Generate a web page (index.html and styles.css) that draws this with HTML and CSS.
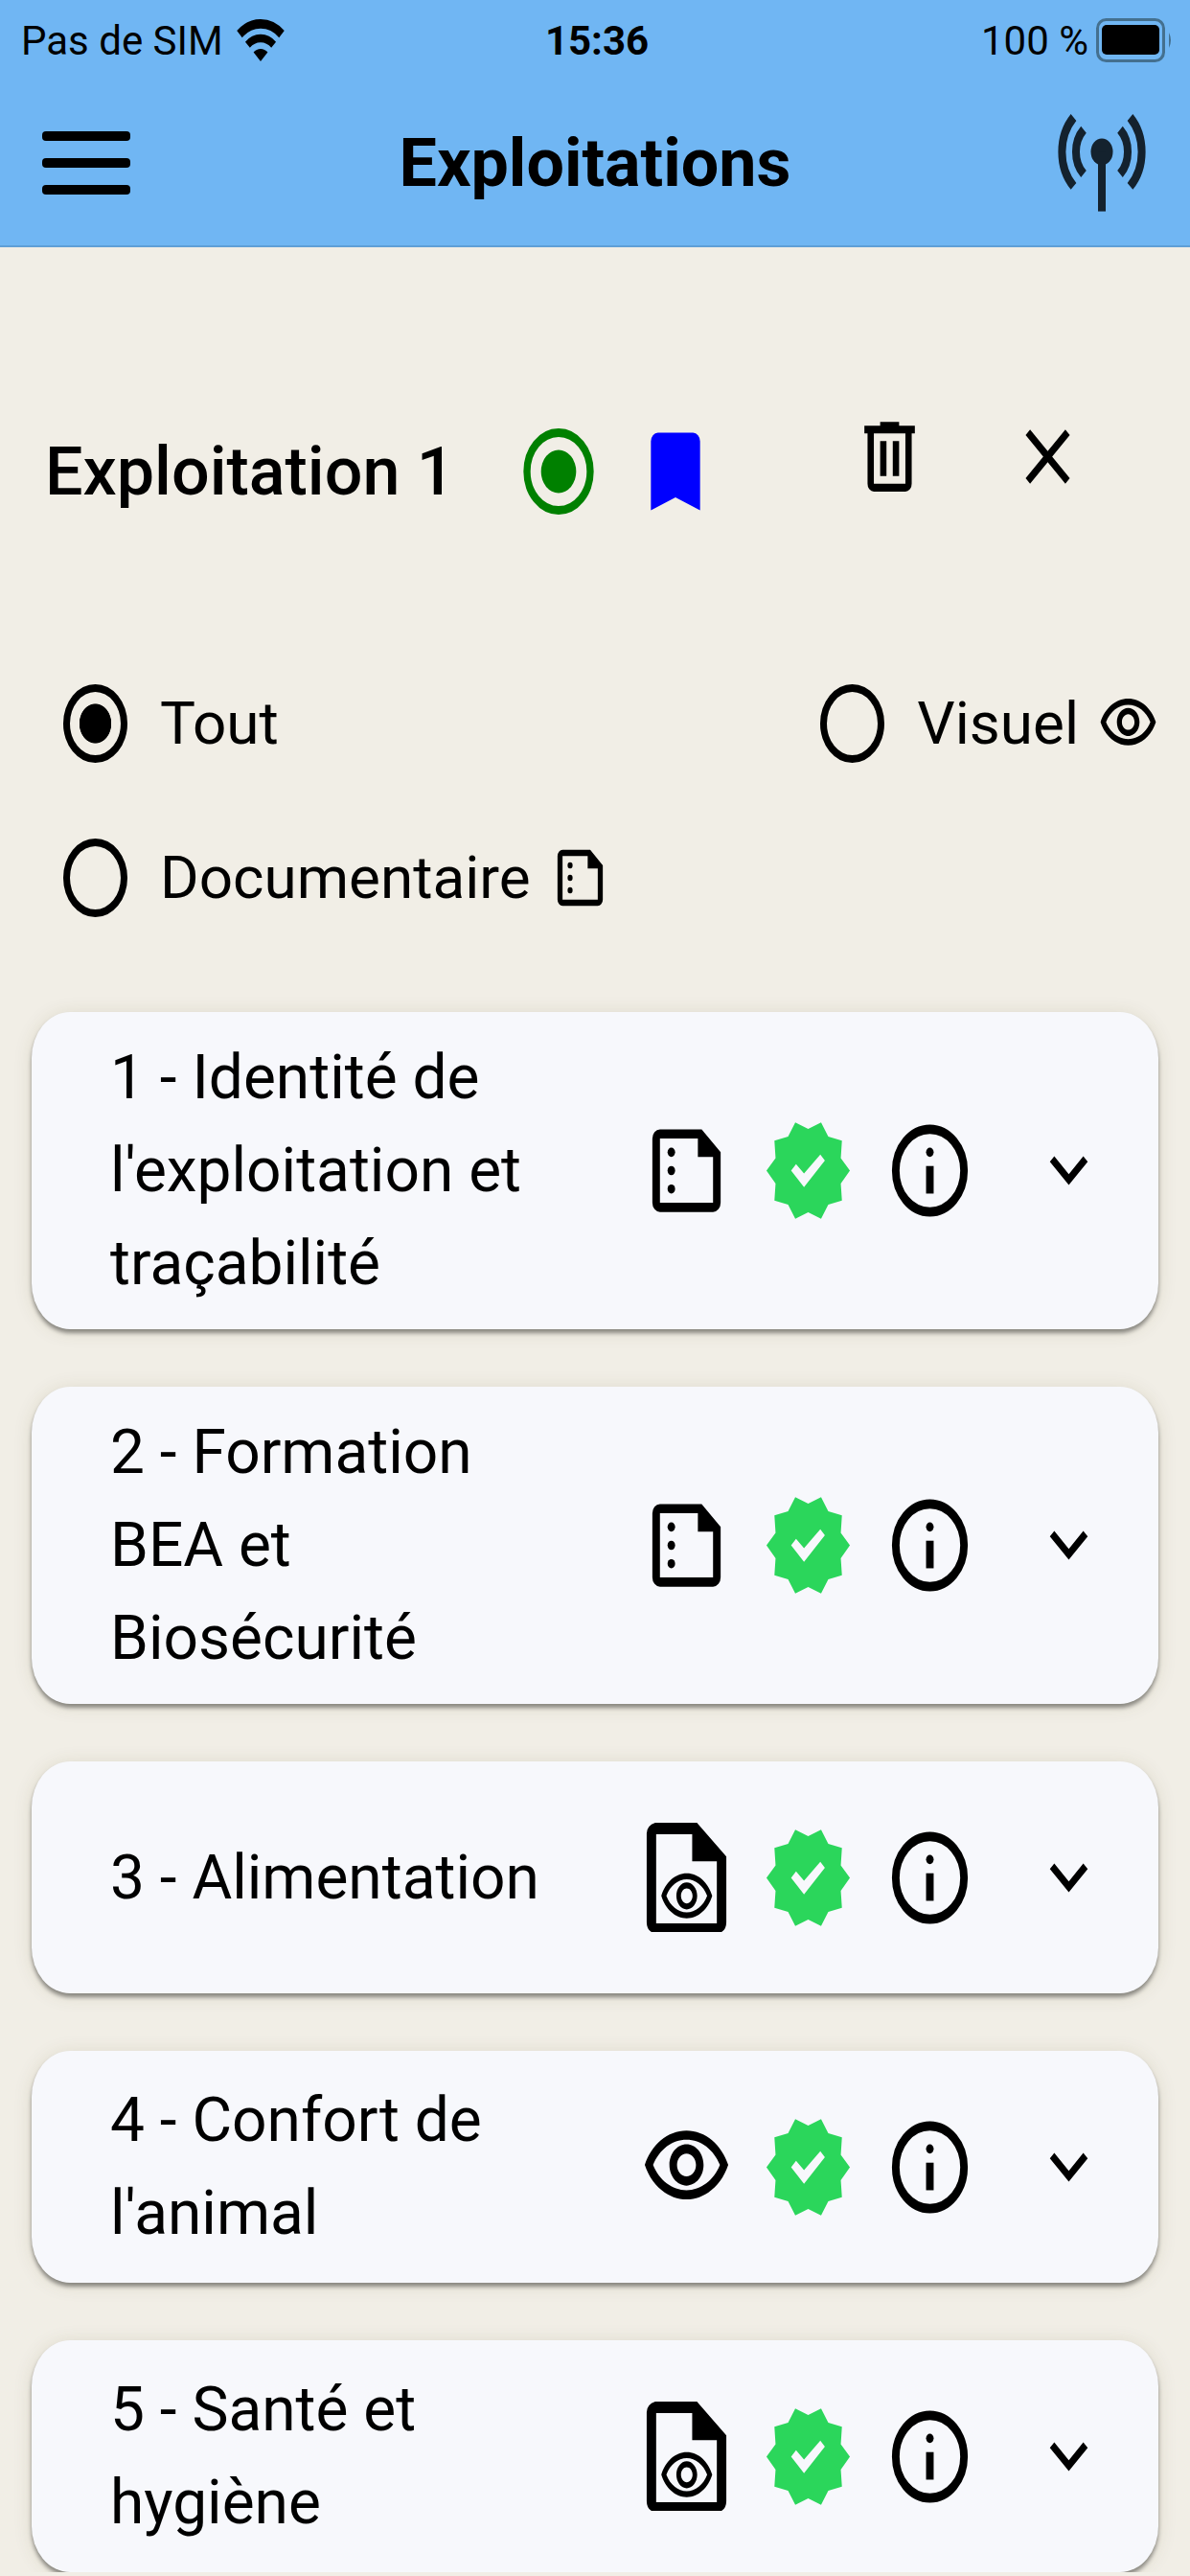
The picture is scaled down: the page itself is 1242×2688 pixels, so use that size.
FILE: index.html
```html
<!DOCTYPE html>
<html lang="fr">

<head>
    <meta charset="UTF-8" />
    <meta name="viewport" content="width=device-width, initial-scale=1.0" />
    <title>Exploitations</title>
    <link rel="stylesheet" href="styles.css">
</head>

<body>
    <!-- Icônes partagées -->
    <svg class="sprite" aria-hidden="true">
        <symbol id="icon-doc" viewBox="0 0 24 24" preserveAspectRatio="none">
            <path fill-rule="evenodd" d="M5 3h11l5 5v11a2 2 0 0 1-2 2H5a2 2 0 0 1-2-2V5a2 2 0 0 1 2-2zm0 2v14h14V9h-4V5z" />
            <circle cx="8" cy="8" r="1" />
            <circle cx="8" cy="12" r="1" />
            <circle cx="8" cy="16" r="1" />
        </symbol>
        <symbol id="icon-eye" viewBox="0 0 24 24" preserveAspectRatio="none">
            <path d="M12 6c3.79 0 7.17 2.13 8.82 5.5C19.17 14.87 15.79 17 12 17s-7.17-2.13-8.82-5.5C4.83 8.13 8.21 6 12 6m0-2C7 4 2.73 7.11 1 11.5 2.73 15.89 7 19 12 19s9.27-3.11 11-7.5C21.27 7.11 17 4 12 4zm0 5c1.38 0 2.5 1.12 2.5 2.5S13.38 14 12 14s-2.5-1.12-2.5-2.5S10.62 9 12 9m0-2c-2.48 0-4.5 2.02-4.5 4.5S9.52 16 12 16s4.5-2.02 4.5-4.5S14.48 7 12 7z" />
        </symbol>
        <symbol id="icon-doc-eye" viewBox="0 0 96 114" preserveAspectRatio="none">
            <path fill-rule="evenodd" d="M15 0h44l31 35v68q0 7-5 10H11q-5-3-5-10V11q0-8 9-11zm1 12v92h64V40H54V12z" />
            <path transform="translate(19 40) scale(2.44 3.1)" d="M12 6c3.79 0 7.17 2.13 8.82 5.5C19.17 14.87 15.79 17 12 17s-7.17-2.13-8.82-5.5C4.83 8.13 8.21 6 12 6m0-2C7 4 2.73 7.11 1 11.5 2.73 15.89 7 19 12 19s9.27-3.11 11-7.5C21.27 7.11 17 4 12 4zm0 5c1.38 0 2.5 1.12 2.5 2.5S13.38 14 12 14s-2.5-1.12-2.5-2.5S10.62 9 12 9m0-2c-2.48 0-4.5 2.02-4.5 4.5S9.52 16 12 16s4.5-2.02 4.5-4.5S14.48 7 12 7z" />
        </symbol>
        <symbol id="icon-badge" viewBox="-12 -12 24 24" preserveAspectRatio="none">
            <path fill-rule="evenodd" d="M-3.4-10.5L0-9.1 3.4-10.5 5.3-7.4 8.9-6.5 8.6-2.7 11 0 8.6 2.8 8.9 6.5 5.3 7.4 3.4 10.5 0 9.1-3.4 10.5-5.3 7.4-8.9 6.5-8.6 2.8-11 0-8.6-2.7-8.9-6.5-5.3-7.4zM-4.5 0L-1.1 3.6 4.4-2.2 3.2-3.5-1.1.6-3.2-1.4z" />
        </symbol>
        <symbol id="icon-info" viewBox="0 0 24 24" preserveAspectRatio="none">
            <circle cx="12" cy="12" r="9" fill="none" stroke="currentColor" stroke-width="2" />
            <circle cx="12" cy="8" r="1" />
            <path d="M11 11h2v6h-2z" />
        </symbol>
        <symbol id="icon-chevron" viewBox="0 0 24 24" preserveAspectRatio="none">
            <path d="M7.4 8.3L12 12.9l4.6-4.6L18 9.7l-6 6-6-6z" />
        </symbol>
        <symbol id="icon-trash" viewBox="0 0 24 24" preserveAspectRatio="none">
            <path fill-rule="evenodd" d="M9 3h6v1h5v2h-1v13a2 2 0 0 1-2 2H7a2 2 0 0 1-2-2V6H4V4h5zM7 6v13h10V6zM9 8h2v9H9zM13 8h2v9h-2z" />
        </symbol>
        <symbol id="icon-close" viewBox="0 0 24 24" preserveAspectRatio="none">
            <path d="M19 6.41L17.59 5 12 10.59 6.41 5 5 6.41 10.59 12 5 17.59 6.41 19 12 13.41 17.59 19 19 17.59 13.41 12z" />
        </symbol>
        <symbol id="icon-target" viewBox="0 0 24 24" preserveAspectRatio="none">
            <circle cx="12" cy="12" r="9" fill="none" stroke="currentColor" stroke-width="2" />
            <circle cx="12" cy="12" r="5" />
        </symbol>
        <symbol id="icon-bookmark" viewBox="0 0 24 24" preserveAspectRatio="none">
            <path d="M17 3H7a2 2 0 0 0-2 2v16l7-3 7 3V5a2 2 0 0 0-2-2z" />
        </symbol>
    </svg>

    <header class="header">
        <div class="status-bar">
            <div class="status-left">
                <span>Pas de SIM</span>
                <svg class="wifi" viewBox="-25 -36 50 36" preserveAspectRatio="none" aria-hidden="true">
                    <path d="M-22-23.2A32 32 0 0 1 22-23.2" fill="none" stroke="currentColor" stroke-width="8" />
                    <path d="M-13.6-14.1A19.6 19.6 0 0 1 13.6-14.1" fill="none" stroke="currentColor" stroke-width="7" />
                    <path d="M0 0L-7.4-7.7A10.6 10.6 0 0 1 7.4-7.7z" />
                </svg>
            </div>
            <span class="clock">15:36</span>
            <div class="status-right">
                <span>100 %</span>
                <svg class="battery" viewBox="0 0 80 46" aria-hidden="true">
                    <rect x="1.500" y="1.500" width="69" height="43" rx="9" fill="none" stroke="#44708f" stroke-width="3" />
                    <rect x="6" y="7" width="60" height="31" rx="5" />
                    <path d="M76 15q4 8 0 16z" fill="#44708f" />
                </svg>
            </div>
        </div>
        <nav class="nav-bar">
            <button class="icon-btn menu-btn" aria-label="Menu">
                <span class="bar"></span>
                <span class="bar"></span>
                <span class="bar"></span>
            </button>
            <h1 class="page-title">Exploitations</h1>
            <button class="icon-btn network-btn" aria-label="Réseau">
                <svg class="antenna" viewBox="-48 -34 96 87" preserveAspectRatio="none">
                    <circle cx="0" cy="0" r="11.500" />
                    <path d="M-4 0h8v51h-8z" />
                    <path fill="none" stroke="currentColor" stroke-width="8" d="M-29.500-29.500A42 42 0 0 0-29.500 29.500M29.500-29.500A42 42 0 0 1 29.500 29.500M-19-19A26.500 26.500 0 0 0-19 19M19-19A26.500 26.500 0 0 1 19 19" />
                </svg>
            </button>
        </nav>
    </header>

    <main class="content">
        <div class="farm-header">
            <h2 class="farm-name">Exploitation 1</h2>
            <svg class="icon-lg target"><use href="#icon-target" /></svg>
            <svg class="icon-lg bookmark"><use href="#icon-bookmark" /></svg>
            <div class="farm-actions">
                <button class="icon-btn" aria-label="Supprimer">
                    <svg class="icon-sm"><use href="#icon-trash" /></svg>
                </button>
                <button class="icon-btn" aria-label="Fermer">
                    <svg class="icon-sm"><use href="#icon-close" /></svg>
                </button>
            </div>
        </div>

        <form class="filters">
            <label class="filter" for="filter-all">
                <input type="radio" id="filter-all" name="filter" checked>
                <span>Tout</span>
            </label>
            <label class="filter" for="filter-visual">
                <input type="radio" id="filter-visual" name="filter">
                <span>Visuel</span>
                <svg class="icon-xs"><use href="#icon-eye" /></svg>
            </label>
            <label class="filter" for="filter-doc">
                <input type="radio" id="filter-doc" name="filter">
                <span>Documentaire</span>
                <svg class="icon-xs"><use href="#icon-doc" /></svg>
            </label>
        </form>

        <ul class="cards">
            <li class="card">
                <h3 class="card-title">1 - Identité de l'exploitation et traçabilité</h3>
                <div class="card-icons">
                    <svg class="icon"><use href="#icon-doc" /></svg>
                    <svg class="icon badge"><use href="#icon-badge" /></svg>
                    <button class="icon-btn" aria-label="Informations"><svg class="icon"><use href="#icon-info" /></svg></button>
                </div>
                <button class="icon-btn" aria-label="Ouvrir"><svg class="icon-sm"><use href="#icon-chevron" /></svg></button>
            </li>
            <li class="card">
                <h3 class="card-title">2 - Formation BEA et Biosécurité</h3>
                <div class="card-icons">
                    <svg class="icon"><use href="#icon-doc" /></svg>
                    <svg class="icon badge"><use href="#icon-badge" /></svg>
                    <button class="icon-btn" aria-label="Informations"><svg class="icon"><use href="#icon-info" /></svg></button>
                </div>
                <button class="icon-btn" aria-label="Ouvrir"><svg class="icon-sm"><use href="#icon-chevron" /></svg></button>
            </li>
            <li class="card">
                <h3 class="card-title">3 - Alimentation</h3>
                <div class="card-icons">
                    <svg class="icon"><use href="#icon-doc-eye" /></svg>
                    <svg class="icon badge"><use href="#icon-badge" /></svg>
                    <button class="icon-btn" aria-label="Informations"><svg class="icon"><use href="#icon-info" /></svg></button>
                </div>
                <button class="icon-btn" aria-label="Ouvrir"><svg class="icon-sm"><use href="#icon-chevron" /></svg></button>
            </li>
            <li class="card">
                <h3 class="card-title">4 - Confort de l'animal</h3>
                <div class="card-icons">
                    <svg class="icon"><use href="#icon-eye" /></svg>
                    <svg class="icon badge"><use href="#icon-badge" /></svg>
                    <button class="icon-btn" aria-label="Informations"><svg class="icon"><use href="#icon-info" /></svg></button>
                </div>
                <button class="icon-btn" aria-label="Ouvrir"><svg class="icon-sm"><use href="#icon-chevron" /></svg></button>
            </li>
            <li class="card">
                <h3 class="card-title">5 - Santé et hygiène</h3>
                <div class="card-icons">
                    <svg class="icon"><use href="#icon-doc-eye" /></svg>
                    <svg class="icon badge"><use href="#icon-badge" /></svg>
                    <button class="icon-btn" aria-label="Informations"><svg class="icon"><use href="#icon-info" /></svg></button>
                </div>
                <button class="icon-btn" aria-label="Ouvrir"><svg class="icon-sm"><use href="#icon-chevron" /></svg></button>
            </li>
        </ul>
    </main>
</body>

</html>
```

FILE: styles.css
```css
* {
    box-sizing: border-box;
}

body {
    margin: 0;
    background: #f1eee6;
    color: #000;
    font-family: Roboto, sans-serif;
    font-size: 64px;
}

h1,
h2,
h3,
ul {
    margin: 0;
    padding: 0;
}

svg {
    display: block;
    flex: none;
    fill: currentColor;
}

.sprite {
    display: none;
}

.icon-btn {
    display: block;
    padding: 0;
    border: none;
    background: none;
    color: inherit;
    cursor: pointer;
}

/* Header */
.header {
    background: #70b6f3;
    border-bottom: 2px solid #5f9fd6;
}

.status-bar,
.nav-bar {
    display: grid;
    grid-template-columns: 1fr auto 1fr;
    align-items: center;
}

.status-bar {
    height: 84px;
    padding: 0 18px 0 22px;
    font-size: 42px;
}

.status-left,
.status-right {
    display: flex;
    align-items: center;
    gap: 14px;
}

.status-right {
    justify-content: flex-end;
    gap: 8px;
}

.clock {
    font-weight: bold;
}

.wifi {
    width: 50px;
    height: 44px;
}

.battery {
    width: 80px;
    height: 46px;
}

.nav-bar {
    height: 172px;
    padding: 0 44px;
}

.menu-btn {
    display: flex;
    flex-direction: column;
    gap: 18px;
    width: 92px;
}

.bar {
    height: 10px;
    border-radius: 4px;
    background: #000;
}

.page-title {
    font-size: 70px;
    font-weight: bold;
}

.network-btn {
    justify-self: end;
    color: #14222e;
}

.antenna {
    width: 96px;
    height: 106px;
}

/* Content */
.content {
    padding: 170px 33px 0;
}

.farm-header {
    display: flex;
    align-items: center;
    padding-left: 14px;
}

.farm-name {
    flex: 0 0 492px;
    font-size: 70px;
    font-weight: 500;
    line-height: 96px;
}

.icon-lg {
    width: 88px;
    height: 108px;
}

.icon-sm {
    width: 79px;
    height: 97px;
}

.icon-xs {
    width: 63px;
    height: 78px;
}

.icon {
    width: 95px;
    height: 115px;
}

.target {
    color: #008000;
}

.bookmark {
    margin-left: 34px;
    color: #0000ff;
}

.farm-actions {
    display: flex;
    gap: 86px;
    margin-left: auto;
    padding: 0 76px 30px 0;
}

.filters {
    display: flex;
    flex-wrap: wrap;
    justify-content: space-between;
    margin-top: 119px;
    padding-left: 33px;
    font-size: 62px;
}

.filter {
    display: flex;
    align-items: center;
    height: 161px;
}

.filter .icon-xs {
    margin-left: 20px;
}

.filter input {
    appearance: none;
    width: 67px;
    height: 82px;
    margin: 0 34px 0 0;
    border: solid #000;
    border-width: 8px 7px;
    border-radius: 50%;
}

.filter input:checked {
    background: radial-gradient(ellipse 17px 21px, #000 96%, transparent 100%);
}

.cards {
    display: flex;
    flex-direction: column;
    gap: 60px;
    margin-top: 60px;
    list-style: none;
}

.card {
    display: flex;
    align-items: center;
    min-height: 242px;
    padding: 20px 54px 20px 82px;
    border-radius: 40px / 48px;
    background: #f7f8fc;
    box-shadow: 0 4px 4px rgba(0, 0, 0, 0.4), 0 2px 20px rgba(80, 70, 0, 0.12);
}

.card-title {
    flex: 1;
    padding-right: 80px;
    font-weight: normal;
    font-size: 64px;
    line-height: 97px;
}

.card-icons {
    display: flex;
    gap: 32px;
    margin-right: 58px;
}

.badge {
    color: #2bd65b;
}
```
